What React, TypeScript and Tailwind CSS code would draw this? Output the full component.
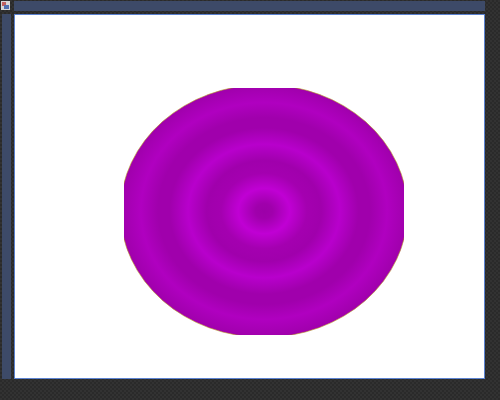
export default function App() {
  return (
    <div className="flex h-[400px] w-[500px] flex-col overflow-hidden bg-[#2e2e2e] bg-[repeating-conic-gradient(#323232_0_25%,#2a2a2a_0_50%)] bg-[length:4px_4px]">
      {/* top strip */}
      <div className="flex h-[14px] shrink-0">
        <div className="flex w-[14px] shrink-0 items-start p-px">
          <svg width="9" height="9" viewBox="0 0 9 9">
            <rect width="9" height="9" fill="#d8d8d8" />
            <rect x="1" y="1" width="4" height="4" fill="#c06060" />
            <rect x="3" y="4" width="5" height="4" fill="#5070b0" />
          </svg>
        </div>
        <div className="mt-px mb-[3px] w-[471px] bg-[#3d4a68]" />
      </div>
      <div className="flex min-h-0 flex-1">
        {/* left strip */}
        <div className="w-[14px] shrink-0 pl-[2px] pr-[3px]">
          <div className="h-[365px] bg-[#3d4a68]" />
        </div>
        <div>
          <div className="h-[365px] w-[471px] border border-[#5b82d0] bg-white">
            <svg width="469" height="363" viewBox="15 15 469 363" className="block">
              <defs>
                <radialGradient id="rings" gradientUnits="userSpaceOnUse" cx="264" cy="211" r="126" gradientTransform="translate(264 211) scale(1.136 1) translate(-264 -211)">
                  <stop offset="0" stop-color="#9c00a8" />
                  <stop offset="0.06" stop-color="#a000ac" />
                  <stop offset="0.18" stop-color="#c000d4" />
                  <stop offset="0.3" stop-color="#a400b0" />
                  <stop offset="0.4" stop-color="#a000ac" />
                  <stop offset="0.53" stop-color="#b800cc" />
                  <stop offset="0.66" stop-color="#a000ac" />
                  <stop offset="0.74" stop-color="#a000ac" />
                  <stop offset="0.86" stop-color="#b000c0" />
                  <stop offset="1" stop-color="#a000ac" />
                </radialGradient>
                <clipPath id="box">
                  <rect x="124" y="88" width="280" height="247" />
                </clipPath>
              </defs>
              <ellipse cx="264" cy="211" rx="143.6" ry="126.4" fill="url(#rings)" stroke="#b8a020" strokeWidth="0.6" clipPath="url(#box)" />
            </svg>
          </div>
        </div>
      </div>
    </div>
  );
}
